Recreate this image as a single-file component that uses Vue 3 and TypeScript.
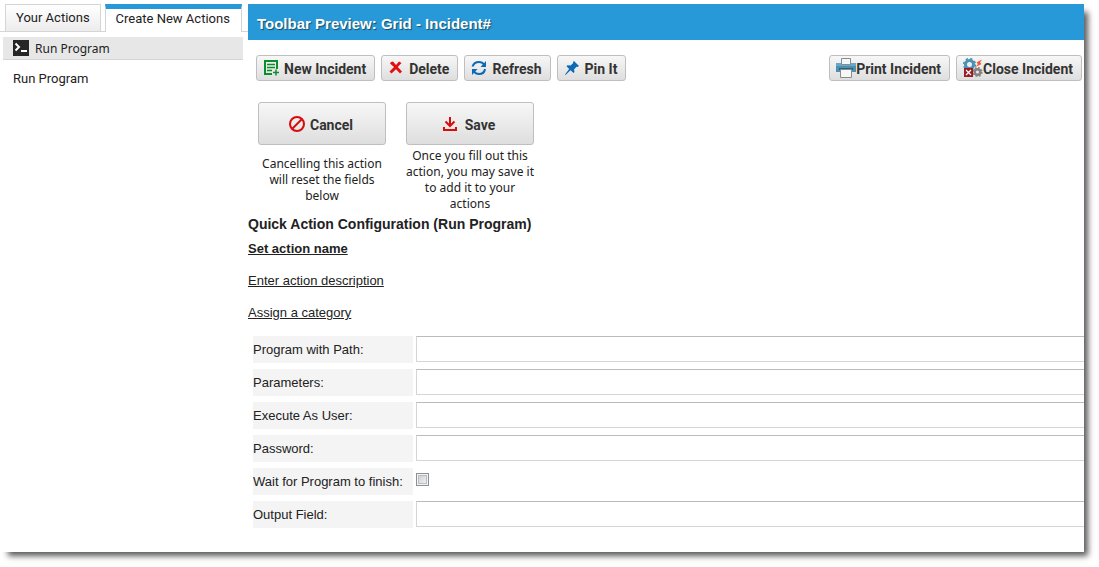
<script setup lang="ts">
import { ref } from 'vue'

interface Field {
  id: string
  label: string
  type: 'text' | 'password' | 'checkbox'
}

const tabs = ['Your Actions', 'Create New Actions']
const activeTab = ref('Create New Actions')

const fields: Field[] = [
  { id: 'path', label: 'Program with Path:', type: 'text' },
  { id: 'parameters', label: 'Parameters:', type: 'text' },
  { id: 'user', label: 'Execute As User:', type: 'text' },
  { id: 'password', label: 'Password:', type: 'password' },
  { id: 'wait', label: 'Wait for Program to finish:', type: 'checkbox' },
  { id: 'output', label: 'Output Field:', type: 'text' },
]
</script>

<template>
  <div class="window">
    <aside class="sidebar">
      <nav class="tabs">
        <button
          v-for="tab in tabs"
          :key="tab"
          type="button"
          class="tab"
          :class="{ active: tab === activeTab }"
          @click="activeTab = tab"
        >{{ tab }}</button>
      </nav>
      <a href="#" class="group">
        <svg width="16" height="16" viewBox="0 0 16 16" aria-hidden="true">
          <rect width="16" height="16" fill="#262626" />
          <path d="M2.500 3.500 6 7 2.500 10.500" fill="none" stroke="#fff" stroke-width="2" />
          <path d="M8 11h6" stroke="#fff" stroke-width="2" />
        </svg>
        <span>Run Program</span>
      </a>
      <a href="#" class="entry">Run Program</a>
    </aside>

    <main class="main">
      <h1 class="title">Toolbar Preview: Grid - Incident#</h1>

      <div class="toolbar">
        <button type="button" class="btn">
          <svg class="gap" width="16" height="16" viewBox="0 0 16 16" aria-hidden="true">
            <path d="M9 14H2V1h12v8" fill="none" stroke="#0a8f2c" stroke-width="2" />
            <path d="M4 4.500h8M4 7.500h8M4 10.500h5M10 12.500h6M13 9.500v6" fill="none" stroke="#0a8f2c" stroke-width="1.500" />
          </svg>
          <span>New Incident</span>
        </button>
        <button type="button" class="btn">
          <svg class="gap" width="16" height="16" viewBox="0 0 16 16" aria-hidden="true">
            <path d="M3 2 5 1.500 8 5 11 1.500 13.500 3 9.800 7 14 11.500 12 13.500 8 9.300 3.500 13.500 1.500 11.500 6 7 2 3.500z" fill="#e01010" />
          </svg>
          <span>Delete</span>
        </button>
        <button type="button" class="btn">
          <svg class="gap" width="16" height="16" viewBox="0 0 16 16" aria-hidden="true">
            <path d="M1.500 6.500C2.500 3.500 5 2 8 2c2 0 4 1 5 2.500M14 9c-.5 3.500-3 5-6 5-2 0-4-1-5-2.500" fill="none" stroke="#0b69b5" stroke-width="2" />
            <path d="M15 1v6H9.500zM1 15V9h5.500z" fill="#0b69b5" />
          </svg>
          <span>Refresh</span>
        </button>
        <button type="button" class="btn">
          <svg class="gap" width="16" height="16" viewBox="0 0 16 16" aria-hidden="true">
            <path d="M10 1 15 6 13.500 7 12.500 6.700 10 9.500 10.500 12 9.500 13 6.500 10.200 1.500 15 1 14.500 5.200 9 2.500 6.300 3.500 5.300 6.500 5.500 9.300 3 9 2z" fill="#0b69b5" />
          </svg>
          <span>Pin It</span>
        </button>

        <button type="button" class="btn push">
          <svg width="20" height="20" viewBox="0 0 20 20" aria-hidden="true">
            <path d="M0 5h20v9H0z" fill="#4a91b5" />
            <path d="M0 5h20v3H0z" fill="#69a8c6" />
            <path d="M3 10h14v2H3z" fill="#27617e" />
            <path d="M5.500.5h9v6h-9zM4.500 11.500h11v8h-11z" fill="#f7f7f7" stroke="#8b8b8b" />
          </svg>
          <span>Print Incident</span>
        </button>
        <button type="button" class="btn">
          <svg width="20" height="20" viewBox="0 0 20 20" aria-hidden="true">
            <circle cx="6.500" cy="6.500" r="4" fill="none" stroke="#4b91b4" stroke-width="3" />
            <circle cx="6.500" cy="6.500" r="5.800" fill="none" stroke="#4b91b4" stroke-width="1.600" stroke-dasharray="2.300 2.255" />
            <circle cx="14.500" cy="14" r="2.800" fill="none" stroke="#828282" stroke-width="2.400" />
            <circle cx="14.500" cy="14" r="4.400" fill="none" stroke="#828282" stroke-width="1.400" stroke-dasharray="1.800 1.656" />
            <path d="M19 1.500 13.500 4.500 15 6 12.500 9 18.500 6 17 4.500z" fill="#f4512c" />
            <rect x="1" y="10" width="9" height="9" fill="#9b1c20" />
            <path d="m3 12 5 5m0-5-5 5" stroke="#fff" stroke-width="1.200" />
          </svg>
          <span>Close Incident</span>
        </button>
      </div>

      <div class="decisions">
        <div class="decision">
          <button type="button" class="btn big">
            <svg width="16" height="16" viewBox="0 0 16 16" aria-hidden="true">
              <circle cx="8" cy="8" r="7" fill="none" stroke="#d80c0c" stroke-width="2" />
              <path d="m3.500 12.500 9-9" stroke="#d80c0c" stroke-width="2" />
            </svg>
            <span>Cancel</span>
          </button>
          <p class="hint low">Cancelling this action will reset the fields below</p>
        </div>
        <div class="decision">
          <button type="button" class="btn big save">
            <svg width="14" height="14" viewBox="0 0 14 14" aria-hidden="true">
              <path d="M7 0v9M2.500 4.500 7 9l4.500-4.500M1 10v3h12v-3" fill="none" stroke="#d80c0c" stroke-width="2" />
            </svg>
            <span>Save</span>
          </button>
          <p class="hint">Once you fill out this action, you may save it to add it to your actions</p>
        </div>
      </div>

      <h2 class="heading">Quick Action Configuration (Run Program)</h2>
      <div class="links">
        <a href="#" class="strong">Set action name</a>
        <a href="#">Enter action description</a>
        <a href="#">Assign a category</a>
      </div>

      <form class="form" @submit.prevent>
        <div v-for="field in fields" :key="field.id" class="row">
          <label :for="field.id">{{ field.label }}</label>
          <input :id="field.id" :type="field.type" :class="field.type === 'checkbox' ? 'check' : 'box'" />
        </div>
      </form>
    </main>
  </div>
</template>

<style>
body {
  background: #fff;
}
</style>

<style scoped>
.window {
  display: flex;
  box-sizing: border-box;
  min-height: calc(100vh - 19px);
  margin: 4px 15px 15px 0;
  background: #fff;
  box-shadow: 6px 6px 6px -2px rgba(0, 0, 0, 0.65);
  color: #222;
  font: 13px/16px "Liberation Sans", Arial, sans-serif;
}

.window * {
  box-sizing: border-box;
}

svg {
  flex: none;
}

.sidebar {
  flex: none;
  width: 248px;
  font-family: Roboto, sans-serif;
}

.tabs {
  display: flex;
  gap: 4px;
  height: 28px;
  padding: 0 5px;
  border-bottom: 1px solid #d5d5d5;
}

.tab {
  height: 27px;
  padding: 0 10px;
  border: 1px solid #d5d5d5;
  border-bottom: 0;
  background: linear-gradient(#fff, #ececec);
  color: #222;
  font: 13px/16px Roboto, sans-serif;
  white-space: nowrap;
}

.tab.active {
  height: 28px;
  padding: 0 11px 4px 10px;
  border-top: 5px solid #2899d8;
  background: #fff;
}

.group {
  display: flex;
  align-items: center;
  gap: 6px;
  height: 23px;
  margin: 5px 5px 0 3px;
  padding: 0 10px;
  border-bottom: 1px solid #d5d5d5;
  background: #e7e7e7;
  color: #222;
  font: 12px/16px "Noto Sans", sans-serif;
  text-decoration: none;
}

.group span,
.btn span {
  padding-top: 2px;
}

.entry {
  display: block;
  padding: 11px 13px;
  color: #222;
  text-decoration: none;
}

.main {
  flex: 1;
  min-width: 0;
}

.title {
  margin: 0;
  padding: 12px 9px 8px;
  background: #2899d8;
  color: #fff;
  font: bold 15px/16px "Liberation Sans", Arial, sans-serif;
  text-shadow: 1px 1px 1px rgba(0, 0, 0, 0.5);
}

.toolbar {
  display: flex;
  gap: 6px;
  padding: 15px 2px 0 8px;
}

.btn {
  display: flex;
  align-items: center;
  justify-content: center;
  height: 26px;
  padding: 0 8px 0 6px;
  border: 1px solid #bfbfbf;
  border-radius: 3px;
  background: linear-gradient(#f7f7f7, #dedede);
  color: #333;
  font: bold 14px/16px Roboto, sans-serif;
  white-space: nowrap;
}

.gap {
  margin-right: 5px;
}

.push {
  margin-left: auto;
}

.decisions {
  display: flex;
  gap: 20px;
  padding: 21px 10px 0;
}

.decision {
  width: 128px;
}

.big {
  gap: 5px;
  width: 100%;
  height: 43px;
}

.save {
  gap: 8px;
}

.hint {
  margin: 3px 0 0;
  font: 12px/16px "Noto Sans", sans-serif;
  text-align: center;
}

.low {
  margin-top: 11px;
}

.heading {
  margin: 4px 0 0;
  font-size: 14px;
  line-height: 16px;
}

.links {
  display: flex;
  flex-direction: column;
  align-items: flex-start;
  gap: 16px;
  padding-top: 9px;
}

.links a {
  color: #222;
}

.strong {
  font-weight: bold;
}

.form {
  display: flex;
  flex-direction: column;
  gap: 6px;
  padding: 15px 0 0 5px;
}

.row {
  display: flex;
  gap: 3px;
}

.row label {
  flex: none;
  width: 160px;
  height: 27px;
  background: #f4f4f4;
  line-height: 27px;
}

.box {
  flex: 1;
  min-width: 0;
  height: 26px;
  padding: 0 4px;
  border: 1px solid #d5d5d5;
  border-top-color: #bbb;
  border-right: 0;
  background: #fff;
  font: inherit;
}

.check {
  appearance: none;
  width: 13px;
  height: 13px;
  margin: 5px 0 0;
  border: 1px solid #8e8f8f;
  background: linear-gradient(135deg, #c4c8ce, #f6f6f6);
  box-shadow: inset 0 0 0 1px #f4f4f4, inset 0 0 0 2px #b9bec4;
}

.check:checked {
  background: #2899d8;
}
</style>
